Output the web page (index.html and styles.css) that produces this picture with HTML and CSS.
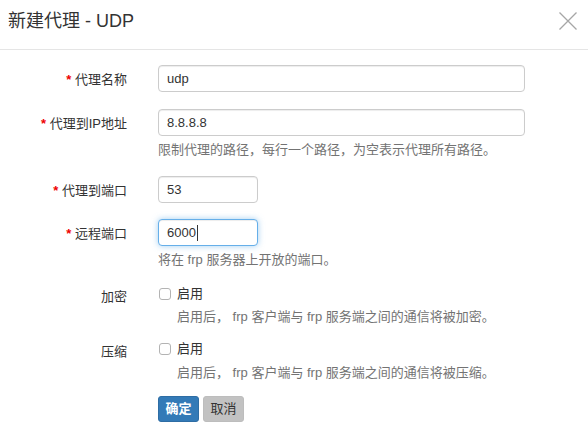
FILE: index.html
```html
<!DOCTYPE html>
<html lang="zh-CN">
<head>
    <meta charset="UTF-8">
    <meta name="viewport" content="width=device-width, initial-scale=1.0">
    <title>新建代理 - UDP</title>
    <link rel="stylesheet" href="styles.css">
</head>
<body>

    <div class="modal-header">
        <h4 class="modal-title">新建代理 - UDP</h4>
        <button class="close" aria-label="关闭">
            <svg width="18" height="18" viewBox="0 0 18 18">
                <path d="M0.5 0.5 L17.5 17.5 M17.5 0.5 L0.5 17.5" stroke="#a6a6a6" stroke-width="1.3" fill="none"/>
            </svg>
        </button>
    </div>

    <form class="modal-body">
        <div class="form-group">
            <label class="control-label"><span class="req">*</span> 代理名称</label>
            <div class="controls">
                <input class="form-control" type="text" value="udp">
            </div>
        </div>

        <div class="form-group">
            <label class="control-label"><span class="req">*</span> 代理到IP地址</label>
            <div class="controls">
                <input class="form-control" type="text" value="8.8.8.8">
                <div class="help-block">限制代理的路径，每行一个路径，为空表示代理所有路径。</div>
            </div>
        </div>

        <div class="form-group group-tight">
            <label class="control-label"><span class="req">*</span> 代理到端口</label>
            <div class="controls">
                <input class="form-control input-short" type="text" value="53">
            </div>
        </div>

        <div class="form-group group-tight">
            <label class="control-label"><span class="req">*</span> 远程端口</label>
            <div class="controls">
                <div class="form-control input-short is-focused">6000<span class="caret"></span></div>
                <div class="help-block">将在 frp 服务器上开放的端口。</div>
            </div>
        </div>

        <div class="form-group group-check">
            <label class="control-label">加密</label>
            <div class="controls">
                <label class="checkbox"><input type="checkbox"> 启用</label>
                <div class="help-block help-indent">启用后， frp 客户端与 frp 服务端之间的通信将被加密。</div>
            </div>
        </div>

        <div class="form-group group-check">
            <label class="control-label">压缩</label>
            <div class="controls">
                <label class="checkbox"><input type="checkbox"> 启用</label>
                <div class="help-block help-indent help-last">启用后， frp 客户端与 frp 服务端之间的通信将被压缩。</div>
            </div>
        </div>

        <div class="form-group">
            <div></div>
            <div class="actions">
                <button type="button" class="btn btn-primary">确定</button>
                <button type="button" class="btn btn-default">取消</button>
            </div>
        </div>
    </form>

</body>
</html>
```

FILE: styles.css
```css
body {
    margin: 0;
    font-family: "Liberation Sans", "Noto Sans CJK SC", sans-serif;
    font-size: 13px;
    color: #333;
    background-color: #fff;
}
.modal-header {
    height: 49px;
    box-sizing: content-box;
    border-bottom: 1px solid #e5e5e5;
    display: flex;
    align-items: flex-start;
    justify-content: space-between;
    padding: 0 11px 0 8px;
}
.modal-title {
    margin: 12px 0 0;
    font-size: 18px;
    line-height: 18px;
    font-weight: normal;
    color: #333;
}
.close {
    margin-top: 12px;
    padding: 0;
    border: 0;
    background: none;
    width: 18px;
    height: 18px;
    display: block;
}
.close svg {
    display: block;
}
.modal-body {
    margin: 0;
    padding: 15px 63px 0 0;
}
.form-group {
    display: grid;
    grid-template-columns: 127px 1fr;
    column-gap: 31px;
    margin-bottom: 17px;
}
.group-tight {
    margin-bottom: 16px;
}
.group-check {
    margin-bottom: 14px;
}
.control-label {
    text-align: right;
    line-height: 18px;
    padding-top: 6px;
    white-space: nowrap;
}
.group-check .control-label {
    padding-top: 3px;
}
.req {
    color: #e00;
    font-weight: bold;
}
.form-control {
    display: block;
    box-sizing: border-box;
    width: 100%;
    height: 27px;
    margin: 0;
    padding: 0 8px;
    border: 1px solid #ccc;
    border-radius: 4px;
    font: inherit;
    font-size: 13px;
    color: #333;
    background: #fff;
    box-shadow: inset 0 1px 1px rgba(0, 0, 0, 0.075);
    outline: none;
}
.input-short {
    width: 100px;
}
.is-focused {
    display: flex;
    align-items: center;
    border-color: #66afe9;
    box-shadow: inset 0 1px 1px rgba(0, 0, 0, 0.075), 0 0 6px rgba(102, 175, 233, 0.6);
}
.caret {
    display: inline-block;
    width: 1px;
    height: 16px;
    margin-left: 1px;
    background: #333;
}
.help-block {
    margin-top: 5px;
    line-height: 18px;
    color: #737373;
    white-space: nowrap;
}
.help-indent {
    padding-left: 19px;
}
.help-last {
    margin-top: 6px;
}
.checkbox {
    display: flex;
    align-items: center;
    height: 18px;
    line-height: 18px;
}
.checkbox input {
    appearance: none;
    -webkit-appearance: none;
    box-sizing: border-box;
    width: 12px;
    height: 12px;
    margin: 0 6px 0 1px;
    border: 1px solid #b3b3b3;
    border-radius: 3px;
    background: #fff;
}
.actions {
    display: flex;
    gap: 4px;
}
.btn {
    height: 26px;
    padding: 0 6.5px;
    border: 1px solid transparent;
    border-radius: 3px;
    font: inherit;
    font-size: 13px;
    line-height: 24px;
}
.btn-primary {
    background-color: #337ab7;
    border-color: #2e6da4;
    color: #fff;
    font-weight: bold;
}
.btn-default {
    background-color: #c2c2c2;
    border-color: #bdbdbd;
    color: #333;
}
```
